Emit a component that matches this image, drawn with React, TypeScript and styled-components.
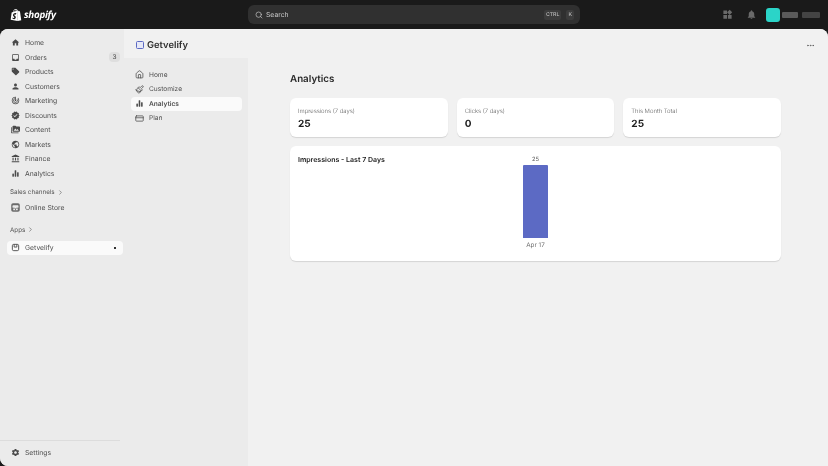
import React from 'react';
import styled, { createGlobalStyle } from 'styled-components';
import { Search, House, Paintbrush, CreditCard, ChevronRight, Ellipsis } from 'lucide-react';
import { SiShopify } from 'react-icons/si';
import {
  MdHome,
  MdInbox,
  MdLocalOffer,
  MdPerson,
  MdTrackChanges,
  MdVerified,
  MdPermMedia,
  MdPublic,
  MdAccountBalance,
  MdSettings,
  MdNotifications,
  MdWidgets,
} from 'react-icons/md';

const GlobalStyle = createGlobalStyle`
  html, body {
    margin: 0;
    padding: 0;
    height: 100%;
    background: #1a1a1a;
    overflow: hidden;
  }
  #root {
    height: 100%;
  }
  * {
    box-sizing: border-box;
  }
`;

const Page = styled.div`
  width: 828px;
  height: 466px;
  display: flex;
  flex-direction: column;
  font-family: Inter, 'Liberation Sans', sans-serif;
  color: #303030;
  text-rendering: geometricPrecision;
  -webkit-font-smoothing: antialiased;
  will-change: transform;
`;

const TopBar = styled.header`
  height: 29px;
  flex: none;
  display: grid;
  grid-template-columns: 248px 332px 1fr;
  align-items: center;
`;

const Brand = styled.div`
  display: flex;
  align-items: center;
  gap: 2px;
  padding-left: 10px;
  color: #fff;
  svg {
    width: 12px;
    height: 14px;
  }
`;

const BrandName = styled.span`
  font-family: 'Open Sans', sans-serif;
  font-size: 9.8px;
  font-weight: 700;
  font-style: italic;
  letter-spacing: -0.3px;
`;

const SearchBox = styled.div`
  height: 19px;
  background: #303030;
  border-radius: 6px;
  display: flex;
  align-items: center;
  padding: 0 6px 0 7px;
  gap: 3px;
  color: #c8c8c8;
  font-size: 6.8px;
`;

const SearchLabel = styled.span`
  flex: 1;
`;

const Key = styled.span`
  height: 10px;
  padding: 0 2px;
  border-radius: 2px;
  background: #3c3c3c;
  color: #bdbdbd;
  font-size: 5.2px;
  font-weight: 500;
  line-height: 10px;
  margin-left: 2px;
`;

const TopActions = styled.div`
  display: flex;
  align-items: center;
  justify-content: flex-end;
  padding-right: 8px;
  color: #6a6a6a;
`;

const ActionIcon = styled.span`
  display: flex;
  margin-right: 13px;
  svg {
    width: 11px;
    height: 11px;
  }
`;

const Avatar = styled.span`
  width: 14px;
  height: 14px;
  border-radius: 3px;
  background: #2bd4c8;
  margin-left: -3.5px;
`;

const MaskedText = styled.span<{ $width: number; $gap: number; $tone: string }>`
  width: ${(p) => p.$width}px;
  height: 6px;
  margin-left: ${(p) => p.$gap}px;
  border-radius: 1px;
  background: ${(p) => p.$tone};
`;

const Main = styled.div`
  flex: 1;
  min-height: 0;
  display: flex;
  border-radius: 8px 8px 0 8px;
  overflow: hidden;
  background: #ebebeb;
`;

const Sidebar = styled.nav`
  width: 124px;
  flex: none;
  display: flex;
  flex-direction: column;
  padding: 6.5px 1px 0 7px;
  background: #ebebeb;
`;

const NavList = styled.div`
  display: flex;
  flex-direction: column;
`;

const NavItem = styled.div<{ $active?: boolean; $strong?: boolean }>`
  height: 14.5px;
  display: flex;
  align-items: center;
  border-radius: 4px;
  padding-left: 4px;
  gap: 5px;
  font-size: 6.8px;
  font-weight: ${(p) => (p.$strong ? 600 : 400)};
  background: ${(p) => (p.$active ? '#fafafa' : 'transparent')};
  color: #4f4f4f;
  svg {
    width: 9px;
    height: 9px;
    flex: none;
    color: #4a4a4a;
  }
`;

const SubNavItem = styled(NavItem)`
  font-size: 6.6px;
`;

const ItemLabel = styled.span`
  flex: 1;
`;

const Badge = styled.span`
  width: 11px;
  height: 10px;
  margin-right: 3px;
  border-radius: 4px;
  background: #dedede;
  color: #616161;
  font-size: 6.5px;
  font-weight: 500;
  line-height: 10px;
  text-align: center;
`;

const SectionTitle = styled.div<{ $top: number; $bottom: number }>`
  display: flex;
  align-items: center;
  gap: 2px;
  height: 12px;
  margin: ${(p) => p.$top}px 0 ${(p) => p.$bottom}px 3px;
  font-size: 6.3px;
  color: #565656;
  svg {
    width: 7px;
    height: 7px;
  }
`;

const PinDot = styled.span`
  width: 2px;
  height: 2px;
  margin-right: 7px;
  background: #303030;
`;

const SidebarFooter = styled.div`
  margin: auto 3px 0 -7px;
  height: 26px;
  padding: 0 0 2px 7px;
  display: flex;
  align-items: center;
  border-top: 1px solid #dcdcdc;
`;

const AppArea = styled.div`
  flex: 1;
  min-width: 0;
  display: flex;
  flex-direction: column;
  background: #f1f1f1;
`;

const AppHeader = styled.div`
  height: 29px;
  flex: none;
  display: flex;
  align-items: center;
  padding: 3px 13px 0 12px;
  gap: 3px;
`;

const AppTitle = styled.h1`
  flex: 1;
  margin: 0;
  font-size: 9.4px;
  font-weight: 600;
  color: #303030;
`;

const AppLogo = styled.span`
  width: 8px;
  height: 8px;
  border: 1.5px solid #5c6ac4;
  border-radius: 1.5px;
  background: #e6e8f7;
`;

const MoreButton = styled.span`
  display: flex;
  color: #5c5c5c;
  svg {
    width: 9px;
    height: 9px;
  }
`;

const AppBody = styled.div`
  flex: 1;
  min-height: 0;
  display: flex;
`;

const SubNav = styled.div`
  width: 124px;
  flex: none;
  padding: 9.5px 6px 0 7px;
  background: #ebebeb;
`;

const Content = styled.main`
  flex: 1;
  padding: 15px 47px 0 42px;
`;

const PageTitle = styled.h2`
  margin: 0 0 11px;
  font-size: 9.8px;
  line-height: 14px;
  font-weight: 600;
  color: #2a2a2a;
`;

const StatGrid = styled.div`
  display: grid;
  grid-template-columns: repeat(3, 1fr);
  gap: 9px;
  margin-bottom: 9px;
`;

const Card = styled.section`
  background: #fff;
  border-radius: 6px;
  box-shadow: 0 1px 1px rgba(0, 0, 0, 0.12);
`;

const StatCard = styled(Card)`
  height: 39px;
  padding: 8.5px 8px 0;
`;

const StatLabel = styled.div`
  font-size: 5.9px;
  line-height: 9px;
  font-weight: 300;
  color: #5f5f5f;
`;

const StatValue = styled.div`
  margin-top: 1px;
  font-size: 10px;
  line-height: 14px;
  font-weight: 700;
  color: #222;
`;

const ChartCard = styled(Card)`
  height: 115px;
  display: grid;
  grid-template-columns: 1fr 25px 1fr;
  padding: 8px 8px 0;
`;

const ChartTitle = styled.h3`
  margin: 0;
  font-size: 7px;
  line-height: 11px;
  font-weight: 600;
  color: #222;
`;

const BarColumn = styled.div`
  display: flex;
  flex-direction: column;
  align-items: center;
`;

const BarValue = styled.span`
  height: 11px;
  font-size: 5.8px;
  line-height: 11px;
  color: #5f5f5f;
`;

const Bar = styled.div<{ $height: number }>`
  width: 25px;
  height: ${(p) => p.$height}px;
  background: #5c6ac4;
  border-radius: 1px 1px 0 0;
`;

const BarLabel = styled.span`
  margin-top: 2px;
  font-size: 6.3px;
  line-height: 10px;
  color: #6f6f6f;
  white-space: nowrap;
`;

const BarsIcon = () => (
  <svg viewBox="0 0 20 20" fill="currentColor">
    <rect x="3" y="10" width="3.5" height="7" rx="1" />
    <rect x="8.2" y="3" width="3.5" height="14" rx="1" />
    <rect x="13.5" y="7" width="3.5" height="10" rx="1" />
  </svg>
);

const AppGlyph = () => (
  <svg viewBox="0 0 20 20" fill="none" stroke="currentColor" strokeWidth="2">
    <rect x="3" y="3" width="14" height="14" rx="3" />
    <path d="M7 3v6h6V3" />
  </svg>
);

const StoreTile = () => (
  <svg viewBox="0 0 20 20">
    <rect x="0.5" y="0.5" width="19" height="19" rx="4" fill="#6b6b6b" />
    <path d="M4 5h12l1 4a2.3 2.3 0 0 1-4 1 2.6 2.6 0 0 1-3 1 2.6 2.6 0 0 1-3-1 2.3 2.3 0 0 1-4-1z" fill="#ebebeb" />
    <path d="M5 12h10v4H5z" fill="#ebebeb" />
    <path d="M9 13h2v3H9z" fill="#6b6b6b" />
  </svg>
);

const mainNav = [
  { label: 'Home', Icon: MdHome },
  { label: 'Orders', Icon: MdInbox, badge: '3' },
  { label: 'Products', Icon: MdLocalOffer },
  { label: 'Customers', Icon: MdPerson },
  { label: 'Marketing', Icon: MdTrackChanges },
  { label: 'Discounts', Icon: MdVerified },
  { label: 'Content', Icon: MdPermMedia },
  { label: 'Markets', Icon: MdPublic },
  { label: 'Finance', Icon: MdAccountBalance },
  { label: 'Analytics', Icon: BarsIcon },
];

const appNav = [
  { label: 'Home', Icon: House },
  { label: 'Customize', Icon: Paintbrush },
  { label: 'Analytics', Icon: BarsIcon, active: true },
  { label: 'Plan', Icon: CreditCard },
];

const stats = [
  { label: 'Impressions (7 days)', value: '25' },
  { label: 'Clicks (7 days)', value: '0' },
  { label: 'This Month Total', value: '25' },
];

export default function App() {
  return (
    <Page>
      <GlobalStyle />
      <TopBar>
        <Brand>
          <SiShopify />
          <BrandName>shopify</BrandName>
        </Brand>
        <SearchBox>
          <Search size={8} />
          <SearchLabel>Search</SearchLabel>
          <Key>CTRL</Key>
          <Key>K</Key>
        </SearchBox>
        <TopActions>
          <ActionIcon>
            <MdWidgets />
          </ActionIcon>
          <ActionIcon>
            <MdNotifications />
          </ActionIcon>
          <Avatar />
          <MaskedText $width={16} $gap={2} $tone="#5a5a5a" />
          <MaskedText $width={18} $gap={4} $tone="#444" />
        </TopActions>
      </TopBar>
      <Main>
        <Sidebar>
          <NavList>
            {mainNav.map(({ label, Icon, badge }) => (
              <NavItem key={label}>
                <Icon />
                <ItemLabel>{label}</ItemLabel>
                {badge && <Badge>{badge}</Badge>}
              </NavItem>
            ))}
          </NavList>
          <SectionTitle $top={5.5} $bottom={2}>
            Sales channels <ChevronRight />
          </SectionTitle>
          <NavItem>
            <StoreTile />
            <ItemLabel>Online Store</ItemLabel>
          </NavItem>
          <SectionTitle $top={9} $bottom={5}>
            Apps <ChevronRight />
          </SectionTitle>
          <NavItem $active>
            <AppGlyph />
            <ItemLabel>Getvelify</ItemLabel>
            <PinDot />
          </NavItem>
          <SidebarFooter>
            <NavItem>
              <MdSettings />
              <ItemLabel>Settings</ItemLabel>
            </NavItem>
          </SidebarFooter>
        </Sidebar>
        <AppArea>
          <AppHeader>
            <AppLogo />
            <AppTitle>Getvelify</AppTitle>
            <MoreButton>
              <Ellipsis />
            </MoreButton>
          </AppHeader>
          <AppBody>
            <SubNav>
              {appNav.map(({ label, Icon, active }) => (
                <SubNavItem key={label} $active={active} $strong={active}>
                  <Icon />
                  <ItemLabel>{label}</ItemLabel>
                </SubNavItem>
              ))}
            </SubNav>
            <Content>
              <PageTitle>Analytics</PageTitle>
              <StatGrid>
                {stats.map((s) => (
                  <StatCard key={s.label}>
                    <StatLabel>{s.label}</StatLabel>
                    <StatValue>{s.value}</StatValue>
                  </StatCard>
                ))}
              </StatGrid>
              <ChartCard>
                <ChartTitle>Impressions - Last 7 Days</ChartTitle>
                <BarColumn>
                  <BarValue>25</BarValue>
                  <Bar $height={73} />
                  <BarLabel>Apr 17</BarLabel>
                </BarColumn>
              </ChartCard>
            </Content>
          </AppBody>
        </AppArea>
      </Main>
    </Page>
  );
}
